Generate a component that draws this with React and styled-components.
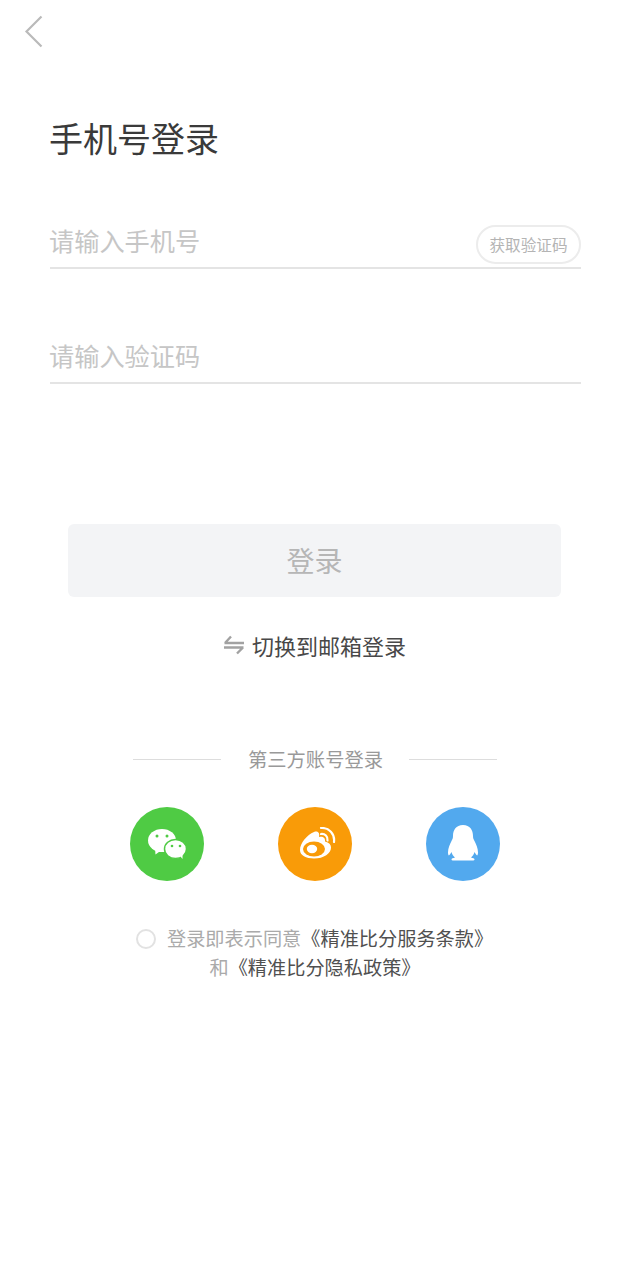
import React from 'react';
import styled, { createGlobalStyle } from 'styled-components';

const GlobalStyle = createGlobalStyle`
  html, body {
    margin: 0;
    padding: 0;
    background: #ffffff;
  }
  * {
    box-sizing: border-box;
  }
  body {
    font-family: "Noto Sans CJK SC", "Noto Sans", sans-serif;
  }
`;

const Page = styled.div`
  width: 630px;
  height: 1280px;
  background: #ffffff;
  overflow: hidden;
`;

const BackButton = styled.button`
  display: block;
  width: 60px;
  height: 48px;
  margin: 8px 0 0 24px;
  padding: 0;
  border: none;
  background: none;
`;

const Form = styled.div`
  padding: 0 49px 0 50px;
`;

const Title = styled.h1`
  margin: 57px 0 0 -1px;
  font-size: 34px;
  line-height: 50px;
  font-weight: 400;
  color: #3a3a3a;
`;

const Field = styled.div`
  display: flex;
  align-items: center;
  justify-content: space-between;
  height: 61px;
  margin-top: ${props => props.top}px;
  padding-top: 4px;
  border-bottom: 2px solid #e4e4e4;
`;

const Placeholder = styled.span`
  margin-left: -1px;
  font-size: 25.2px;
  line-height: 34px;
  color: #c6c6c6;
  font-weight: 400;
`;

const CodeButton = styled.button`
  width: 105px;
  height: 39px;
  margin-top: 9px;
  padding: 0;
  border: 2px solid #ececec;
  border-radius: 20px;
  background: #ffffff;
  font-family: inherit;
  font-size: 15.6px;
  color: #b4b4b4;
`;

const LoginButton = styled.button`
  display: block;
  width: 493px;
  height: 73px;
  margin: 140px 0 0 68px;
  padding: 0 0 2px;
  border: none;
  border-radius: 6px;
  background: #f3f4f6;
  font-family: inherit;
  font-size: 28px;
  font-weight: 400;
  color: #b6b6b6;
`;

const SwitchRow = styled.div`
  display: flex;
  align-items: center;
  justify-content: center;
  gap: 8px;
  margin-top: 31px;
  font-size: 22px;
  line-height: 34px;
  color: #484848;
`;

const Divider = styled.div`
  display: flex;
  align-items: center;
  margin: 83px 0 0 133px;
  width: 364px;
  font-size: 19.3px;
  line-height: 28px;
  color: #999999;
`;

const DividerLine = styled.span`
  flex: 1;
  height: 1px;
  background: #dddddd;
`;

const DividerText = styled.span`
  padding: 0 26px 0 27px;
`;

const SocialRow = styled.div`
  display: flex;
  gap: 74px;
  margin: 34px 0 0 130px;
`;

const SocialIcon = styled.div`
  display: flex;
  align-items: center;
  justify-content: center;
  width: 74px;
  height: 74px;
  border-radius: 50%;
  background: ${props => props.color};
`;

const Agreement = styled.div`
  margin-top: 43px;
  text-align: center;
  font-size: 19.2px;
  line-height: 29px;
  color: #aaaaaa;
`;

const AgreementLine = styled.div`
  display: flex;
  align-items: center;
  justify-content: ${props => (props.first ? 'flex-start' : 'center')};
  padding-left: ${props => (props.first ? '136px' : '0')};
`;

const Radio = styled.span`
  width: 20px;
  height: 20px;
  margin-right: 11px;
  border: 2px solid #e2e2e2;
  border-radius: 50%;
`;

const Link = styled.span`
  color: #505050;
`;

const BackIcon = () => (
  <svg width="20" height="34" viewBox="0 0 20 34" fill="none" style={{ display: 'block' }}>
    <path d="M17.500 1.500 2.500 16.500 17.500 31.500" stroke="#bababa" strokeWidth="2.200" />
  </svg>
);

const SwapIcon = () => (
  <svg width="20" height="20" viewBox="0 0 20 20" fill="none">
    <path d="M0.500 8h19.500M7 1.500 1 8M0 12.500h19.500M13 18.500l6-6" stroke="#a2a2a2" strokeWidth="2.400" />
  </svg>
);

const WechatIcon = () => (
  <svg width="39" height="31" viewBox="0 0 39 31" style={{ marginLeft: 1 }}>
    <ellipse cx="14" cy="11.500" rx="14" ry="11.500" fill="#fff" />
    <path d="M7 18 7.500 25.500 13 21.500Z" fill="#fff" />
    <ellipse cx="27.500" cy="20" rx="11" ry="9.500" fill="#fff" stroke="#4fcb44" strokeWidth="1.500" />
    <path d="M32 27 34.500 30 34.500 25Z" fill="#fff" />
    <circle cx="9" cy="7" r="1.500" fill="#4fcb44" />
    <circle cx="19" cy="7" r="1.500" fill="#4fcb44" />
    <circle cx="24" cy="17" r="1.300" fill="#4fcb44" />
    <circle cx="32" cy="17" r="1.300" fill="#4fcb44" />
  </svg>
);

const WeiboIcon = () => (
  <svg width="42" height="34" viewBox="0 0 42 34" fill="none">
    <path d="M6 23C6 16 13 8 20 5 24 3.500 26 6 25 10 28.500 9 31.500 10.500 31 14.500 35 15.500 37 17.500 37 20.500 37 26.500 30 31.500 20 31.500 12 31.500 6 28.500 6 23Z" fill="#fff" />
    <ellipse cx="20" cy="22" rx="11" ry="7.500" fill="#f99b08" />
    <ellipse cx="18" cy="22" rx="5.200" ry="4.200" fill="#fff" />
    <path d="M27 7c4-.5 7 2.500 6.500 6.500" stroke="#fff" strokeWidth="2.200" strokeLinecap="round" />
    <path d="M27 1c8-.5 14 6 13 14" stroke="#fff" strokeWidth="2.200" strokeLinecap="round" />
  </svg>
);

const QQIcon = () => (
  <svg width="30" height="36" viewBox="0 0 30 36" style={{ marginTop: -2 }}>
    <path d="M15 0C8 0 5 5 5 11c0 2-.6 3.500-1.500 5C2 19 0 23 0 27.500c0 1.500.4 2.700.8 3 .8-.6 1.700-1.800 2.700-3.500.5 2.200 1.600 4 3.500 5.500-2 .5-3.500 1-3.500 2 0 .7.700 1 2 1h19c1.300 0 2-.3 2-1 0-1-1.500-1.500-3.500-2 1.900-1.500 3-3.300 3.500-5.500 1 1.700 1.900 2.900 2.700 3.500.4-.3.800-1.500.8-3C30 23 28 19 26.500 16c-.9-1.500-1.500-3-1.500-5 0-6-3-11-10-11Z" fill="#fff" />
  </svg>
);

export default function App() {
  return (
    <Page>
      <GlobalStyle />
      <BackButton>
        <BackIcon />
      </BackButton>
      <Form>
        <Title>手机号登录</Title>
        <Field top={45}>
          <Placeholder>请输入手机号</Placeholder>
          <CodeButton>获取验证码</CodeButton>
        </Field>
        <Field top={54}>
          <Placeholder>请输入验证码</Placeholder>
        </Field>
      </Form>
      <LoginButton>登录</LoginButton>
      <SwitchRow>
        <SwapIcon />
        <span>切换到邮箱登录</span>
      </SwitchRow>
      <Divider>
        <DividerLine />
        <DividerText>第三方账号登录</DividerText>
        <DividerLine />
      </Divider>
      <SocialRow>
        <SocialIcon color="#4fcb44"><WechatIcon /></SocialIcon>
        <SocialIcon color="#f99b08"><WeiboIcon /></SocialIcon>
        <SocialIcon color="#52a9ee"><QQIcon /></SocialIcon>
      </SocialRow>
      <Agreement>
        <AgreementLine first>
          <Radio />
          登录即表示同意<Link>《精准比分服务条款》</Link>
        </AgreementLine>
        <AgreementLine>
          和<Link>《精准比分隐私政策》</Link>
        </AgreementLine>
      </Agreement>
    </Page>
  );
}
